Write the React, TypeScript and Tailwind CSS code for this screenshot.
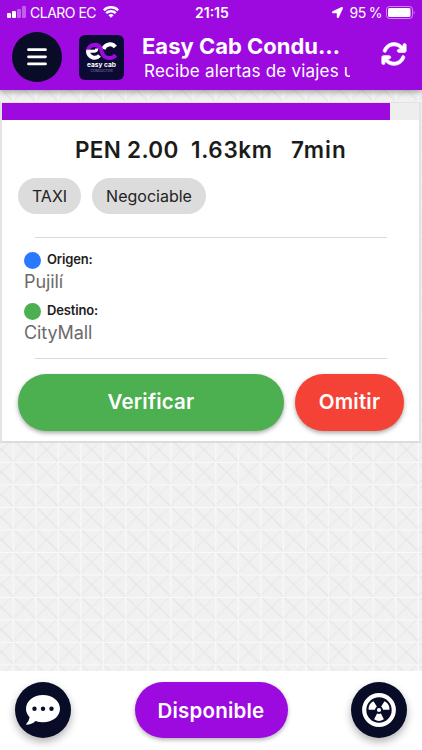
import React from "react";
import { FaLocationArrow } from "react-icons/fa";
import { FaArrowsRotate } from "react-icons/fa6";

function Pattern() {
  return (
    <svg className="absolute inset-0 h-full w-full" aria-hidden="true">
      <defs>
        <pattern id="tile" x="12.8" y="12" width="22.5" height="22.5" patternUnits="userSpaceOnUse">
          <rect width="22.5" height="22.5" fill="#f1f1f1" />
          <path d="M0 21.5L21.5 0" stroke="#eaeaea" strokeWidth="1.2" />
          <path d="M-1 -2L23.5 22.5M-2 19.5L2 23.5" stroke="#e6e6e6" strokeWidth="1.4" />
          <path d="M0 .5H22.5M.5 0V22.5" stroke="#f9f9f9" strokeWidth="1.2" />
        </pattern>
      </defs>
      <rect width="100%" height="100%" fill="url(#tile)" />
    </svg>
  );
}

function StatusBar() {
  return (
    <div className="flex h-6 items-center pl-[7px] pr-[7px] text-white">
      <div className="flex w-[188px] items-center">
        <svg width="19" height="12" viewBox="0 0 19 12" fill="#fff">
          <rect x="0" y="7" width="4" height="5" rx="1" />
          <rect x="5" y="5" width="4" height="7" rx="1" />
          <rect x="10" y="3" width="4" height="9" rx="1" opacity=".35" />
          <rect x="15" y="0" width="4" height="12" rx="1" opacity=".35" />
        </svg>
        <span className="ml-1 whitespace-nowrap text-[14px] tracking-[-0.5px]">CLARO EC</span>
        <svg className="ml-[7px]" width="16" height="12" viewBox="0 0 16 12" fill="none" stroke="#fff" strokeWidth="2.4">
          <path d="M.8 4.3A10.2 10.2 0 0 1 15.2 4.3" />
          <path d="M3.2 7.2A6.8 6.8 0 0 1 12.8 7.2" />
          <path d="M8 11.8L5.4 9.3A3.8 3.8 0 0 1 10.6 9.3Z" fill="#fff" stroke="none" />
        </svg>
      </div>
      <span className="text-[14px] font-semibold">21:15</span>
      <div className="ml-auto flex items-center">
        <FaLocationArrow size={11} />
        <span className="ml-[7px] whitespace-nowrap text-[14px] tracking-[-0.5px] [word-spacing:-0.5px]">95 %</span>
        <svg className="ml-1" width="29" height="13" viewBox="0 0 29 13">
          <rect x=".5" y=".5" width="26" height="12" rx="3" fill="none" stroke="#fff" opacity=".5" />
          <rect x="2" y="2" width="22.5" height="9" rx="1.5" fill="#fff" />
          <path d="M27.8 4.5Q29.3 6.5 27.8 8.5Z" fill="#fff" opacity=".6" />
        </svg>
      </div>
    </div>
  );
}

function Logo() {
  return (
    <svg className="ml-[17px] shrink-0" width="45" height="45" viewBox="0 0 45 45">
      <rect width="45" height="45" rx="6" fill="#0a0a35" />
      <g fill="none" strokeWidth="4">
        <path d="M36.3 12A6.8 6.8 0 0 0 24.5 14" stroke="#fff" />
        <path d="M9 16A6.8 6.8 0 0 1 22 14C23.3 18 23.5 23 31 23Q34.3 23 36.5 20" stroke="#9d0ade" />
        <path d="M7.2 16.2H15.5Q17.8 16 17.8 13.5" stroke="#fff" strokeWidth="3" />
        <path d="M9 16.5A6.6 6.6 0 0 0 20.5 20.5" stroke="#fff" />
      </g>
      <text x="22.5" y="31.5" textAnchor="middle" fill="#fff" fontSize="6.6" fontWeight="700" fontFamily="Inter, sans-serif" textLength="29">easy cab</text>
      <text x="22.5" y="37" textAnchor="middle" fill="#9290ae" fontSize="3.2" fontFamily="Inter, sans-serif" textLength="22">CONDUCTOR</text>
    </svg>
  );
}

function Header() {
  return (
    <header className="relative h-[90px] bg-[#9d0ae0] text-white shadow-[0_2px_6px_rgba(0,0,0,0.35)]">
      <StatusBar />
      <div className="flex h-[66px] pl-3 pt-2">
        <button className="flex h-[50px] w-[50px] shrink-0 items-center justify-center rounded-full bg-[#080c27]" aria-label="menu">
          <svg width="20" height="18" viewBox="0 0 20 18" stroke="#fff" strokeWidth="2.8" strokeLinecap="round">
            <path d="M1.5 1.7H18.5M1.5 8.8H18.5M1.5 15.9H18.5" />
          </svg>
        </button>
        <div className="pt-[3px]">
          <Logo />
        </div>
        <div className="ml-[18px] w-[208px] overflow-hidden whitespace-nowrap">
          <div className="text-[22px] font-bold leading-[28px]">Easy Cab Condu…</div>
          <div className="ml-[2px] text-[17px] leading-[22px] tracking-[0.2px]">Recibe alertas de viajes u</div>
        </div>
        <FaArrowsRotate className="ml-[31px] mt-[9px] shrink-0 overflow-visible stroke-white [stroke-width:14]" size={26} />
      </div>
    </header>
  );
}

function Stop({ label, place, dot }: { label: string; place: string; dot: string }) {
  return (
    <div className="h-[51px]">
      <div className="flex h-[18px] items-center">
        <span className={`h-[17px] w-[17px] rounded-full ${dot}`} />
        <span className="ml-[6px] text-[13px] font-semibold tracking-[-0.15px] text-[#1d1d1d]">{label}</span>
      </div>
      <div className="text-[18px] leading-[25px] tracking-[-0.1px] text-[#6b6b6b]">{place}</div>
    </div>
  );
}

function RideCard() {
  return (
    <section className="relative mt-3 h-[341px] w-[421px] border-2 border-t border-[#e3e3e3] border-b-[#dcdcdc] bg-white">
      <div className="h-[17px] bg-[#eee]">
        <div className="h-full w-[388px] bg-[#9d0ae0]" />
      </div>
      <div className="mt-[16px] flex h-[28px] items-center whitespace-pre pl-[73px] text-[22.5px] font-semibold text-[#1b1b1b]">
        <span className="w-[116px] tracking-[0.3px]">PEN 2.00</span>
        <span className="w-[100px] tracking-[0.65px]">1.63km</span>
        <span className="tracking-[1px]">7min</span>
      </div>
      <div className="mt-[14px] flex gap-[11px] pl-4 text-[16px] text-[#222]">
        <span className="flex h-9 w-[63px] items-center justify-center rounded-full bg-[#dcdcdc]">TAXI</span>
        <span className="flex h-9 w-[114px] items-center justify-center rounded-full bg-[#dcdcdc]">Negociable</span>
      </div>
      <div className="ml-[33px] mt-[23px] w-[352px] border-t border-[#dadada]" />
      <div className="pl-[22px] pt-[13px]">
        <Stop label="Origen:" place="Pujilí" dot="bg-[#2979ff]" />
        <Stop label="Destino:" place="CityMall" dot="bg-[#4caf50]" />
      </div>
      <div className="ml-[33px] mt-[5px] w-[352px] border-t border-[#dadada]" />
      <div className="mt-[14.5px] flex gap-[11px] pl-4 text-[20.5px] font-semibold tracking-[0.2px] text-white">
        <button className="h-[57px] w-[266px] rounded-full bg-[#4caf50] shadow-[0_2px_4px_rgba(0,0,0,0.35)]">Verificar</button>
        <button className="h-[57px] w-[109px] rounded-full bg-[#f44336] shadow-[0_2px_4px_rgba(0,0,0,0.35)]">Omitir</button>
      </div>
    </section>
  );
}

function RadiationIcon() {
  return (
    <svg width="34" height="34" viewBox="-17 -17 34 34">
      <circle r="14.8" fill="none" stroke="#fff" strokeWidth="4.2" />
      <g fill="#fff">
        <circle r="2.1" />
        <path id="blade" d="M-1.9 3.6Q0 4.3 1.9 3.6L4.9 9.2Q0 12.6 -4.9 9.2Z" />
        <use href="#blade" transform="rotate(120)" />
        <use href="#blade" transform="rotate(240)" />
      </g>
    </svg>
  );
}

function Footer() {
  return (
    <footer className="relative mt-auto flex h-[79px] justify-between bg-white px-[15px] pt-[11px]">
      <button className="flex h-14 w-14 items-center justify-center rounded-full bg-[#080c27] shadow-[0_4px_8px_rgba(0,0,0,0.3)]" aria-label="chat">
        <svg width="34" height="30" viewBox="0 0 34 30">
          <path d="M17 0C26.4 0 34 6 34 13.7S26.4 27.3 17 27.3Q13 27.3 9.5 26Q5.5 29.8 .5 29.8Q-.2 29.6 .3 29Q3 26 3.6 22.2Q0 18.4 0 13.7C0 6 7.6 0 17 0Z" fill="#fff" />
          <g fill="#080c27">
            <circle cx="8.5" cy="13.8" r="2.2" />
            <circle cx="17" cy="13.8" r="2.2" />
            <circle cx="25.5" cy="13.8" r="2.2" />
          </g>
        </svg>
      </button>
      <button className="h-14 w-[153px] rounded-full bg-[#9d0ae0] pt-[2px] text-[20.5px] font-semibold tracking-[0.2px] text-white shadow-[0_2px_4px_rgba(0,0,0,0.3)]">Disponible</button>
      <button className="flex h-14 w-14 items-center justify-center rounded-full bg-[#080c27] shadow-[0_4px_8px_rgba(0,0,0,0.3)]" aria-label="radar">
        <RadiationIcon />
      </button>
    </footer>
  );
}

export default function App() {
  return (
    <main className="relative flex h-[750px] w-[422px] flex-col overflow-hidden bg-[#f0f0f0] font-['Inter',sans-serif]">
      <Pattern />
      <Header />
      <RideCard />
      <Footer />
    </main>
  );
}
